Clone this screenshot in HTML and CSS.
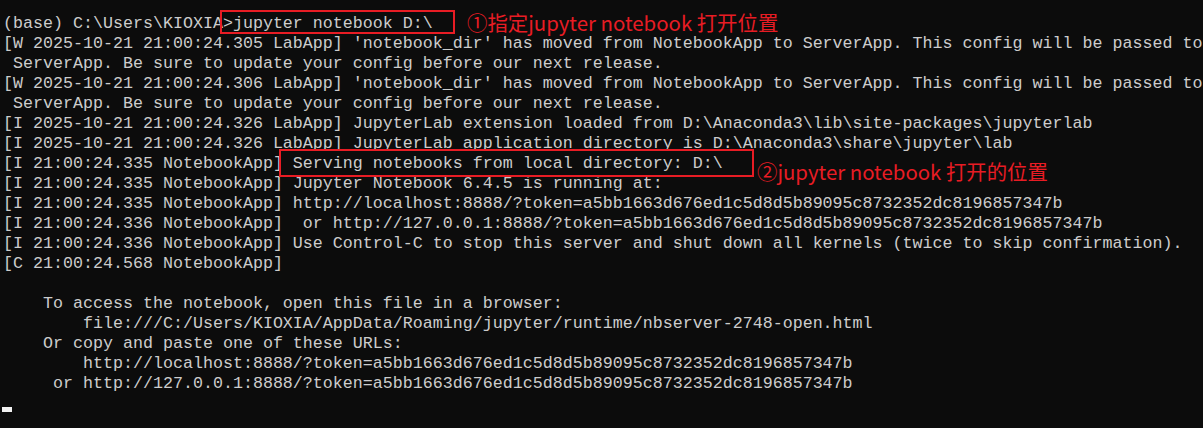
FILE: index.html
```html
<!DOCTYPE html>
<html lang="zh-CN">
<head>
    <meta charset="UTF-8">
    <title>Anaconda Prompt - jupyter notebook</title>
    <link rel="stylesheet" href="styles.css">
</head>
<body>
    <div class="terminal">
<pre class="output">(base) C:\Users\KIOXIA&gt;jupyter notebook D:\
[W 2025-10-21 21:00:24.305 LabApp] 'notebook_dir' has moved from NotebookApp to ServerApp. This config will be passed to
 ServerApp. Be sure to update your config before our next release.
[W 2025-10-21 21:00:24.306 LabApp] 'notebook_dir' has moved from NotebookApp to ServerApp. This config will be passed to
 ServerApp. Be sure to update your config before our next release.
[I 2025-10-21 21:00:24.326 LabApp] JupyterLab extension loaded from D:\Anaconda3\lib\site-packages\jupyterlab
[I 2025-10-21 21:00:24.326 LabApp] JupyterLab application directory is D:\Anaconda3\share\jupyter\lab
[I 21:00:24.335 NotebookApp] Serving notebooks from local directory: D:\
[I 21:00:24.335 NotebookApp] Jupyter Notebook 6.4.5 is running at:
[I 21:00:24.335 NotebookApp] http://localhost:8888/?token=a5bb1663d676ed1c5d8d5b89095c8732352dc8196857347b
[I 21:00:24.336 NotebookApp]  or http://127.0.0.1:8888/?token=a5bb1663d676ed1c5d8d5b89095c8732352dc8196857347b
[I 21:00:24.336 NotebookApp] Use Control-C to stop this server and shut down all kernels (twice to skip confirmation).
[C 21:00:24.568 NotebookApp]

    To access the notebook, open this file in a browser:
        file:///C:/Users/KIOXIA/AppData/Roaming/jupyter/runtime/nbserver-2748-open.html
    Or copy and paste one of these URLs:
        http://localhost:8888/?token=a5bb1663d676ed1c5d8d5b89095c8732352dc8196857347b
     or http://127.0.0.1:8888/?token=a5bb1663d676ed1c5d8d5b89095c8732352dc8196857347b
<span class="cursor"></span></pre>

        <!-- annotations drawn over the console -->
        <div class="mark mark-cmd"></div>
        <div class="note note-cmd">①指定jupyter notebook 打开位置</div>

        <div class="mark mark-dir"></div>
        <div class="note note-dir">②jupyter notebook 打开的位置</div>
    </div>
</body>
</html>
```

FILE: styles.css
```css
:root {
    --bg-color: #0c0c0c;
    --text-color: #cccccc;
    --mark-color: #e81c24;
}

* {
    margin: 0;
    padding: 0;
    box-sizing: border-box;
}

body {
    background-color: var(--bg-color);
    width: 1203px;
    height: 428px;
    overflow: hidden;
}

.terminal {
    position: relative;
    width: 100%;
    height: 100%;
    padding: 14px 0 0 3px;
}

.output {
    font-family: 'Liberation Mono', 'DejaVu Sans Mono', monospace;
    font-size: 16.667px;
    line-height: 20px;
    color: var(--text-color);
    white-space: pre;
}

.cursor {
    display: inline-block;
    width: 10px;
    height: 5px;
    margin-left: -1px;
    background-color: #f2f2f2;
    vertical-align: -4px;
}

.mark {
    position: absolute;
    border: 2px solid var(--mark-color);
}

.mark-cmd {
    left: 220px;
    top: 10px;
    width: 235px;
    height: 24px;
}

.mark-dir {
    left: 279px;
    top: 149px;
    width: 475px;
    height: 28px;
}

.note {
    position: absolute;
    font-family: 'Noto Sans CJK SC', 'Noto Sans', sans-serif;
    font-size: 20.4px;
    line-height: 24px;
    color: var(--mark-color);
    white-space: nowrap;
}

.note-cmd {
    left: 467px;
    top: 10px;
}

.note-dir {
    left: 757px;
    top: 159px;
}
```
